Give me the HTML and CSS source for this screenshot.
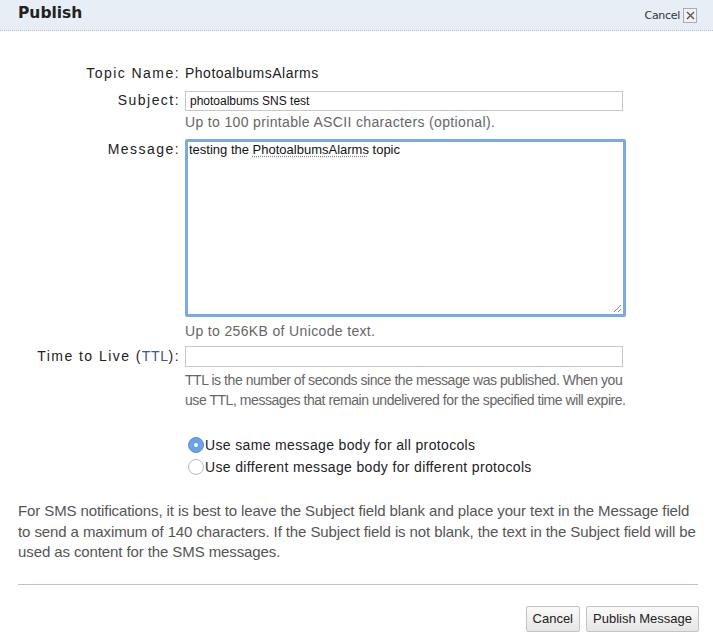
FILE: index.html
```html
<!DOCTYPE html>
<html>
<head>
<meta charset="utf-8">
<link rel="stylesheet" href="styles.css">
</head>
<body>
<div class="dialog">
  <div class="header">
    <h1 class="title">Publish</h1>
    <div class="close">
      <span class="close-text">Cancel</span>
      <span class="close-box">
        <svg width="9" height="9" viewBox="0 0 9 9"><path d="M1 1L8 8M8 1L1 8" stroke="#555" stroke-width="1.4"/></svg>
      </span>
    </div>
  </div>
  <div class="body">
    <div class="form">
      <div class="label row-topic">Topic Name:</div>
      <div class="value row-topic">PhotoalbumsAlarms</div>

      <div class="label row-subject">Subject:</div>
      <div class="field">
        <div class="input">photoalbums SNS test</div>
        <div class="hint hint-subject">Up to 100 printable ASCII characters (optional).</div>
      </div>

      <div class="label row-message">Message:</div>
      <div class="field">
        <div class="textarea">testing the <span class="spell">PhotoalbumsAlarms</span> topic
          <svg class="grip" width="9" height="9" viewBox="0 0 9 9"><path d="M8 1L1 8M8 5L5 8" stroke="#888" stroke-width="1"/></svg>
        </div>
        <div class="hint hint-message">Up to 256KB of Unicode text.</div>
      </div>

      <div class="label row-ttl">Time to Live (<span class="ttl">TTL</span>):</div>
      <div class="field">
        <div class="input empty"></div>
        <div class="hint multi">TTL is the number of seconds since the message was published. When you use TTL, messages that remain undelivered for the specified time will expire.</div>
      </div>
    </div>

    <div class="radios">
      <div class="radio-row"><span class="radio checked"><span class="dot"></span></span>Use same message body for all protocols</div>
      <div class="radio-row"><span class="radio"></span>Use different message body for different protocols</div>
    </div>

    <p class="note">For SMS notifications, it is best to leave the Subject field blank and place your text in the Message field to send a maximum of 140 characters. If the Subject field is not blank, the text in the Subject field will be used as content for the SMS messages.</p>

    <div class="divider"></div>

    <div class="actions">
      <button class="btn">Cancel</button>
      <button class="btn">Publish Message</button>
    </div>
  </div>
</div>
</body>
</html>
```

FILE: styles.css
```css
* { box-sizing: border-box; }
html, body { margin: 0; padding: 0; background: #fff; }
body {
  font-family: "Liberation Sans", Arial, sans-serif;
  font-size: 14px;
  color: #222;
}
.dialog { width: 713px; height: 638px; background: #fff; overflow: hidden; }
.header {
  height: 31px;
  background: #e8eef6;
  border-bottom: 1px dotted #b9c3d0;
  display: flex;
  align-items: center;
  justify-content: space-between;
  padding: 0 16px 0 18px;
}
.title {
  margin: 0;
  font-family: "DejaVu Sans", Verdana, sans-serif;
  font-weight: bold;
  font-size: 15.5px;
  color: #222;
  position: relative;
  top: -2px;
}
.close { display: flex; align-items: center; gap: 3px; font-family: "DejaVu Sans", Verdana, sans-serif; font-size: 11px; color: #333; }
.close-text { letter-spacing: -0.3px; }
.close-box {
  width: 14px; height: 15px;
  border: 1px solid #aab;
  background: #f2f2f2;
  display: flex; align-items: center; justify-content: center;
}
.body { padding: 0 16px 0 18px; }
.form {
  display: grid;
  grid-template-columns: 162px 442px;
  column-gap: 5px;
  padding-top: 34px;
  align-items: start;
}
.label {
  text-align: right;
  letter-spacing: 1.45px;
  color: #222;
  font-size: 14px;
  line-height: 16px;
}
.value { line-height: 16px; color: #222; letter-spacing: 0.5px; }
.row-topic { margin-bottom: 10px; }
.row-subject { padding-top: 1px; }
.row-message { padding-top: 2px; }
.row-ttl { padding-top: 2px; }
.ttl { color: #3b5a8a; letter-spacing: 0.6px; }
.input {
  width: 438px;
  height: 20px;
  border: 1px solid #c8c8c8;
  background: #fff;
  font-size: 12px;
  line-height: 18px;
  padding: 0 4px;
  color: #111;
}
.input.empty { height: 21px; }
.hint {
  color: #666;
  font-size: 14px;
  line-height: 16px;
  letter-spacing: 0.35px;
}
.hint-subject { margin-top: 3px; margin-bottom: 9px; }
.hint-message { margin-top: 6px; margin-bottom: 7px; }
.hint.multi { line-height: 20px; margin-top: 3px; width: 450px; letter-spacing: -0.45px; }
.textarea {
  position: relative;
  width: 441px;
  height: 178px;
  border: 3px solid #7ca8e6;
  border-radius: 2px;
  font-size: 13px;
  line-height: 14px;
  padding: 1px 1px;
  color: #111;
}
.spell { text-decoration: underline dotted #888; text-underline-offset: 2px; }
.grip { position: absolute; right: 1px; bottom: 1px; }
.radios {
  margin-top: 24px;
  margin-left: 170px;
  font-size: 14px;
  line-height: 22px;
  letter-spacing: 0.35px;
  color: #222;
}
.radio-row { display: flex; align-items: center; }
.radio {
  width: 16px; height: 16px;
  border-radius: 50%;
  border: 1px solid #bbb;
  background: #fff;
  margin-right: 1px;
  display: flex; align-items: center; justify-content: center;
}
.radio.checked { background: #6aa1e8; border-color: #5b90d8; }
.dot { width: 4px; height: 4px; border-radius: 50%; background: #fff; }
.note {
  margin: 23px 0 0 0;
  color: #555;
  font-size: 15px;
  line-height: 20.5px;
  width: 684px;
  letter-spacing: -0.1px;
}
.divider {
  margin-top: 21px;
  border-top: 1px solid #b8c4d6;
  width: 680px;
}
.actions {
  display: flex;
  justify-content: flex-end;
  gap: 6px;
  margin-top: 21px;
  width: 681px;
}
.btn {
  font-family: "Liberation Sans", Arial, sans-serif;
  font-size: 13px;
  color: #222;
  height: 26px;
  padding: 0 6px;
  background: linear-gradient(#fafafa, #e6e6e6);
  border: 1px solid #c4c4c4;
  border-radius: 2px;
}
```
